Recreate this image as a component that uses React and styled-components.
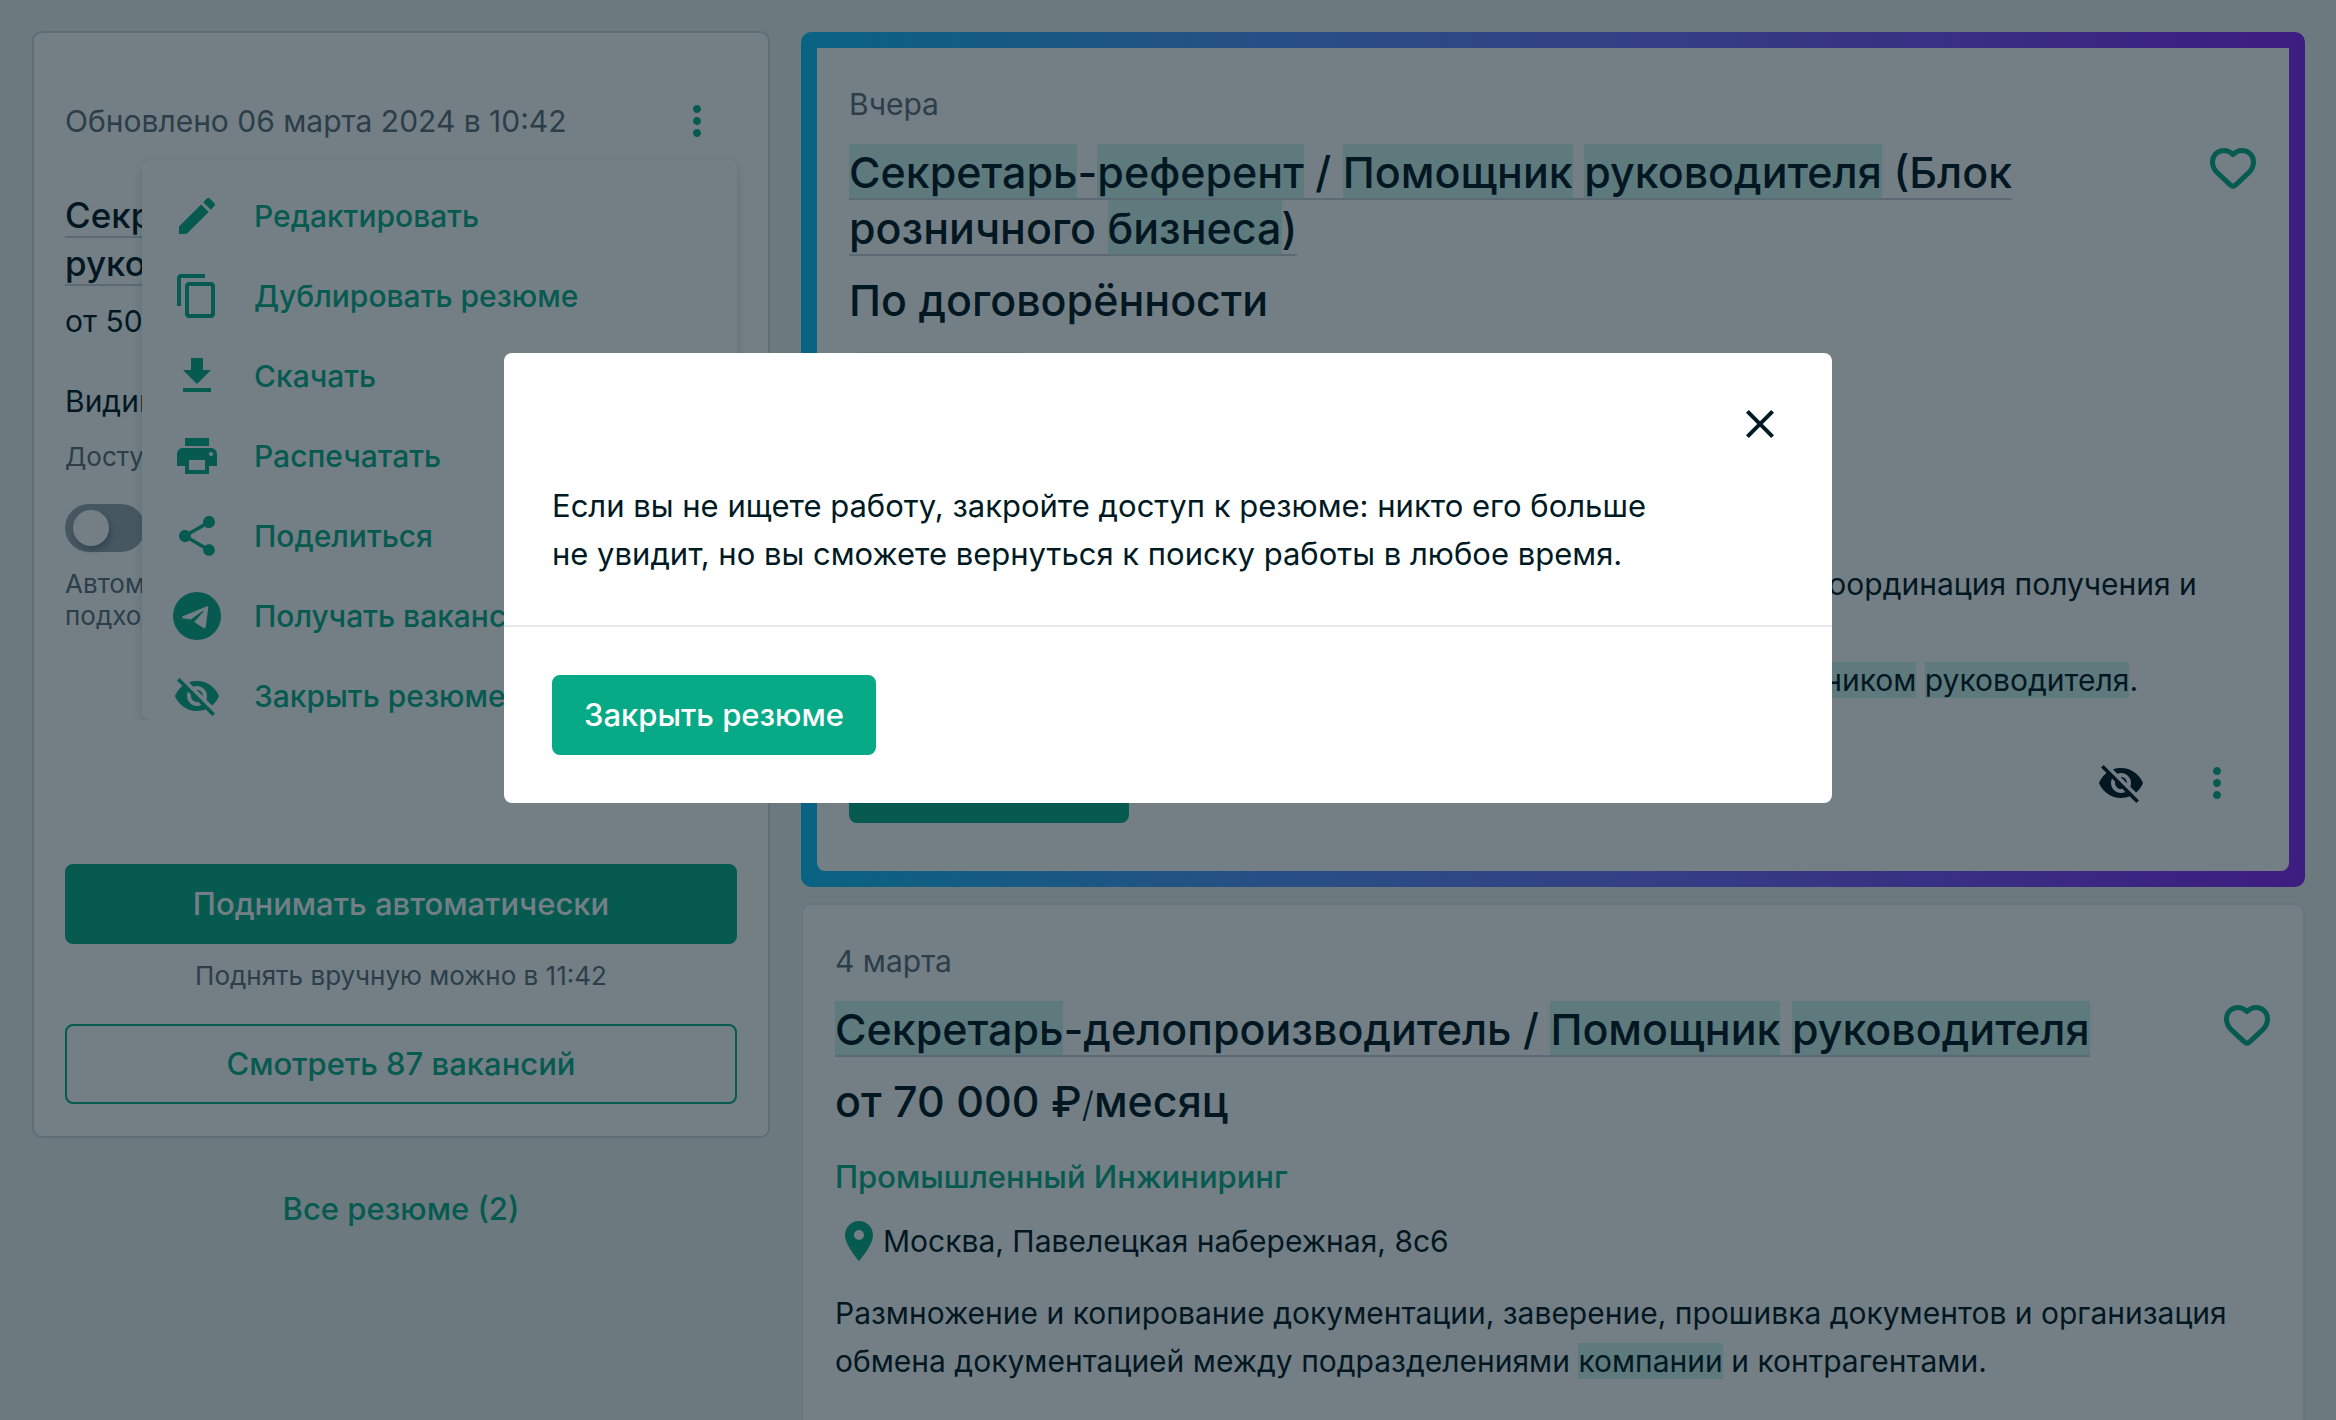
import React from "react";
import styled, { createGlobalStyle } from "styled-components";
import {
  MdClose,
  MdContentCopy,
  MdDownload,
  MdEdit,
  MdMoreVert,
  MdPlace,
  MdPrint,
  MdShare,
  MdVisibilityOff,
} from "react-icons/md";

const GlobalStyle = createGlobalStyle`
  * {
    box-sizing: border-box;
  }
  body {
    margin: 0;
    background: #f0f3f4;
    color: #001420;
    font-family: Inter, "Open Sans", sans-serif;
    font-size: 30px;
    line-height: 48px;
    overflow: hidden;
  }
  button {
    font: inherit;
    cursor: pointer;
  }
  h2, h3, p, ul {
    margin: 0;
    padding: 0;
  }
`;

const Page = styled.div`
  display: grid;
  grid-template-columns: 738fr 1504fr;
  gap: 31px;
  align-items: start;
  height: 100vh;
  padding: 31px 31px 0 32px;
  overflow: hidden;
`;

const Sidebar = styled.aside`
  display: flex;
  flex-direction: column;
  align-items: stretch;
`;

const ResumeCard = styled.section`
  display: flex;
  flex-direction: column;
  padding: 64px 31px 32px;
  background: #ffffff;
  border: 2px solid #cfd8de;
  border-radius: 10px;
`;

const ResumeHeader = styled.div`
  position: relative;
  display: flex;
  justify-content: space-between;
  align-items: center;
  height: 48px;
  margin-bottom: 46px;
  padding-right: 16px;
  color: #5e6c77;
`;

const IconButton = styled.button`
  display: flex;
  padding: 0;
  background: none;
  border: none;
  color: ${(props) => props.$color || "#07aa87"};
  font-size: 48px;
`;

const Menu = styled.ul`
  position: absolute;
  top: 63px;
  right: 0;
  display: flex;
  flex-direction: column;
  gap: 32px;
  width: 595px;
  padding: 32px 31px 0;
  list-style: none;
  background: #ffffff;
  border-radius: 8px;
  box-shadow: 0 4px 12px rgba(30, 60, 80, 0.2);
  clip-path: inset(-12px -12px 0 -12px);
`;

const MenuItem = styled.a`
  display: flex;
  align-items: center;
  gap: 33px;
  color: #07aa87;
  font-size: 30px;
  font-weight: 500;
  line-height: 48px;
  text-decoration: none;
  white-space: nowrap;
  svg {
    flex: none;
    width: 48px;
    height: 48px;
  }
`;

const ResumeTitle = styled.h3`
  font-size: 35px;
  font-weight: 500;
  line-height: 48px;
`;

const TitleLink = styled.a`
  color: inherit;
  text-decoration: none;
  border-bottom: 2px solid #c8d0d8;
`;

const ResumeText = styled.p`
  margin-top: ${(props) => props.$top || 0}px;
`;

const Caption = styled.p`
  margin-top: ${(props) => props.$top || 0}px;
  color: #5e6c77;
  font-size: 26px;
  line-height: 32px;
  text-align: ${(props) => (props.$center ? "center" : "left")};
`;

const Switch = styled.input`
  display: flex;
  align-items: center;
  appearance: none;
  width: 80px;
  height: 48px;
  margin: 31px 0 0;
  padding: 0 8px;
  background: #9aa5af;
  border-radius: 24px;
  &::before {
    content: "";
    width: 36px;
    height: 36px;
    background: #ffffff;
    border-radius: 50%;
    box-shadow: 2px 4px 6px rgba(0, 20, 40, 0.3);
  }
`;

const Button = styled.button`
  align-self: flex-start;
  height: 80px;
  padding: 0 30px;
  background: #07aa87;
  border: 2px solid #07aa87;
  border-radius: 8px;
  color: #ffffff;
  font-size: 31px;
  font-weight: 500;
  white-space: nowrap;
`;

const WideButton = styled(Button)`
  align-self: stretch;
  margin-top: ${(props) => props.$top}px;
`;

const OutlineButton = styled(WideButton)`
  background: transparent;
  color: #07aa87;
`;

const AllResumes = styled.a`
  align-self: center;
  margin-top: 47px;
  color: #07aa87;
  font-size: 31px;
  font-weight: 500;
  text-decoration: none;
`;

const Vacancies = styled.main`
  display: flex;
  flex-direction: column;
  gap: 16px;
  padding-top: 1px;
`;

const Featured = styled.div`
  padding: 16px;
  background: linear-gradient(90deg, #10c0f8 0%, #5294ff 30%, #7070ff 55%, #8620f4 100%);
  border-radius: 10px;
`;

const VacancyCard = styled.article`
  padding: 32px 32px 48px;
  background: #ffffff;
  border: ${(props) => (props.$plain ? "2px solid #e4e9ee" : "none")};
  border-radius: ${(props) => (props.$plain ? "10px" : "0 0 8px 8px")};
`;

const VacancyDate = styled.div`
  color: #5e6c77;
`;

const VacancyHead = styled.div`
  display: flex;
  justify-content: space-between;
  align-items: flex-start;
  gap: 48px;
  margin-top: 16px;
`;

const VacancyTitle = styled.h2`
  max-width: 1280px;
  font-size: 43px;
  font-weight: 500;
  line-height: 56px;
`;

const Mark = styled.mark`
  padding-top: ${(props) => (props.$tall ? "2px" : "0")};
  background: #d1f3ec;
  color: inherit;
`;

const Salary = styled.div`
  margin-top: 16px;
  font-size: 43px;
  font-weight: 500;
  line-height: 56px;
`;

const Per = styled.span`
  font-size: 35px;
  font-weight: 300;
  line-height: 1;
`;

const Tag = styled.div`
  width: 180px;
  height: 48px;
  margin-top: 24px;
  background: #f0f3f4;
  border-radius: 8px;
`;

const Company = styled.a`
  display: block;
  margin-top: 24px;
  color: #07aa87;
  font-size: 31px;
  font-weight: 500;
  text-decoration: none;
`;

const Address = styled.div`
  display: flex;
  align-items: center;
  margin-top: 16px;
  svg {
    width: 48px;
    height: 48px;
    color: #07aa87;
  }
`;

const Description = styled.p`
  margin-top: ${(props) => props.$top}px;
`;

const VacancyActions = styled.div`
  display: flex;
  justify-content: space-between;
  align-items: center;
  margin-top: 39px;
  padding-right: 16px;
`;

const ActionIcons = styled.div`
  display: flex;
  gap: 48px;
`;

const Overlay = styled.div`
  position: fixed;
  inset: 0;
  display: flex;
  justify-content: center;
  align-items: flex-start;
  padding-top: 353px;
  background: rgba(6, 27, 37, 0.56);
`;

const Modal = styled.div`
  width: 1328px;
  max-width: 90%;
  background: #ffffff;
  border-radius: 8px;
`;

const ModalBody = styled.div`
  display: flex;
  flex-direction: column;
  padding: 47px 48px;
  color: #001a24;
  font-size: 31px;
`;

const ModalClose = styled(IconButton)`
  align-self: flex-end;
  margin-bottom: 34px;
`;

const ModalFooter = styled.div`
  display: flex;
  padding: 48px;
  border-top: 2px solid #e4e9eb;
`;

const Heart = () => (
  <svg width="48" height="48" viewBox="0 0 48 48" fill="none" aria-hidden="true">
    <path
      d="M24 10.500C21.500 8 18.500 6.500 15 6.500C8.500 6.500 3.500 11.500 3.500 18C3.500 22.500 5.200 25.600 8.200 28.600L21.300 40.900C23 42.400 25 42.400 26.700 40.900L39.800 28.600C42.800 25.600 44.500 22.500 44.500 18C44.500 11.500 39.500 6.500 33 6.500C29.500 6.500 26.500 8 24 10.500Z"
      stroke="currentColor"
      strokeWidth="5"
      strokeLinejoin="round"
    />
  </svg>
);

const Telegram = () => (
  <svg viewBox="0 0 48 48" aria-hidden="true">
    <circle cx="24" cy="24" r="24" fill="currentColor" />
    <path
      d="M9.300 24.600L34 14.200Q35.400 13.800 35.300 15.200L32.800 34.800Q32.400 37 30.500 35.900L21.200 30L30.500 19.600Q31 18.400 29.600 19L17.800 27.600L9.500 26.200Q8.600 25.200 9.300 24.600Z"
      fill="#ffffff"
    />
  </svg>
);

const menuItems = [
  { icon: <MdEdit />, label: "Редактировать" },
  { icon: <MdContentCopy />, label: "Дублировать резюме" },
  { icon: <MdDownload />, label: "Скачать" },
  { icon: <MdPrint />, label: "Распечатать" },
  { icon: <MdShare />, label: "Поделиться" },
  { icon: <Telegram />, label: "Получать вакансии" },
  { icon: <MdVisibilityOff />, label: "Закрыть резюме" },
];

const Resume = () => (
  <Sidebar>
    <ResumeCard>
      <ResumeHeader>
        <span>Обновлено 06 марта 2024 в 10:42</span>
        <IconButton type="button" aria-label="Действия с резюме">
          <MdMoreVert />
        </IconButton>
        <Menu>
          {menuItems.map((item) => (
            <li key={item.label}>
              <MenuItem href="#">
                {item.icon}
                {item.label}
              </MenuItem>
            </li>
          ))}
        </Menu>
      </ResumeHeader>
      <ResumeTitle>
        <TitleLink href="#">
          Секретарь
          <br />
          руководителя
        </TitleLink>
      </ResumeTitle>
      <ResumeText $top={10}>от 50 000 ₽</ResumeText>
      <ResumeText $top={32}>Видимость</ResumeText>
      <Caption $top={16}>Доступно</Caption>
      <Switch type="checkbox" id="auto" />
      <Caption as="label" htmlFor="auto" $top={16}>
        Автоматически
        <br />
        подходящие
      </Caption>
      <WideButton type="button" $top={232}>
        Поднимать автоматически
      </WideButton>
      <Caption $top={16} $center>
        Поднять вручную можно в 11:42
      </Caption>
      <OutlineButton type="button" $top={32}>
        Смотреть 87 вакансий
      </OutlineButton>
    </ResumeCard>
    <AllResumes href="#">Все резюме (2)</AllResumes>
  </Sidebar>
);

const App = () => {
  return (
    <>
      <GlobalStyle />
      <Page>
        <Resume />
        <Vacancies>
          <Featured>
            <VacancyCard>
              <VacancyDate>Вчера</VacancyDate>
              <VacancyHead>
                <VacancyTitle>
                  <TitleLink href="#">
                    <Mark $tall>Секретарь</Mark>-<Mark $tall>референт</Mark> /{" "}
                    <Mark $tall>Помощник</Mark> <Mark $tall>руководителя</Mark> (Блок
                    розничного <Mark $tall>бизнеса</Mark>)
                  </TitleLink>
                </VacancyTitle>
                <IconButton type="button" aria-label="В избранное">
                  <Heart />
                </IconButton>
              </VacancyHead>
              <Salary>По договорённости</Salary>
              <Tag />
              <Description $top={160}>
                Работа со входящей и исходящей корреспонденцией компании. Координация
                получения и
                <br />
                отправки документов.
                <br />
                Опыт работы от одного года секретарём, референтом или{" "}
                <Mark>помощником</Mark> <Mark>руководителя</Mark>.
              </Description>
              <VacancyActions>
                <Button type="button">Откликнуться</Button>
                <ActionIcons>
                  <IconButton type="button" $color="#001420" aria-label="Скрыть">
                    <MdVisibilityOff />
                  </IconButton>
                  <IconButton type="button" aria-label="Ещё">
                    <MdMoreVert />
                  </IconButton>
                </ActionIcons>
              </VacancyActions>
            </VacancyCard>
          </Featured>
          <VacancyCard $plain>
            <VacancyDate>4 марта</VacancyDate>
            <VacancyHead>
              <VacancyTitle>
                <TitleLink href="#">
                  <Mark $tall>Секретарь</Mark>-делопроизводитель /{" "}
                  <Mark $tall>Помощник</Mark> <Mark $tall>руководителя</Mark>
                </TitleLink>
              </VacancyTitle>
              <IconButton type="button" aria-label="В избранное">
                <Heart />
              </IconButton>
            </VacancyHead>
            <Salary>
              от 70 000 ₽<Per>/</Per>месяц
            </Salary>
            <Company href="#">Промышленный Инжиниринг</Company>
            <Address>
              <MdPlace />
              Москва, Павелецкая набережная, 8с6
            </Address>
            <Description $top={24}>
              Размножение и копирование документации, заверение, прошивка документов и
              организация обмена документацией между подразделениями{" "}
              <Mark>компании</Mark> и контрагентами.
            </Description>
          </VacancyCard>
        </Vacancies>
      </Page>
      <Overlay>
        <Modal role="dialog" aria-modal="true">
          <ModalBody>
            <ModalClose type="button" $color="#001a24" aria-label="Закрыть">
              <MdClose />
            </ModalClose>
            <p>
              Если вы не ищете работу, закройте доступ к резюме: никто его больше
              <br />
              не увидит, но вы сможете вернуться к поиску работы в любое время.
            </p>
          </ModalBody>
          <ModalFooter>
            <Button type="button">Закрыть резюме</Button>
          </ModalFooter>
        </Modal>
      </Overlay>
    </>
  );
};

export default App;
